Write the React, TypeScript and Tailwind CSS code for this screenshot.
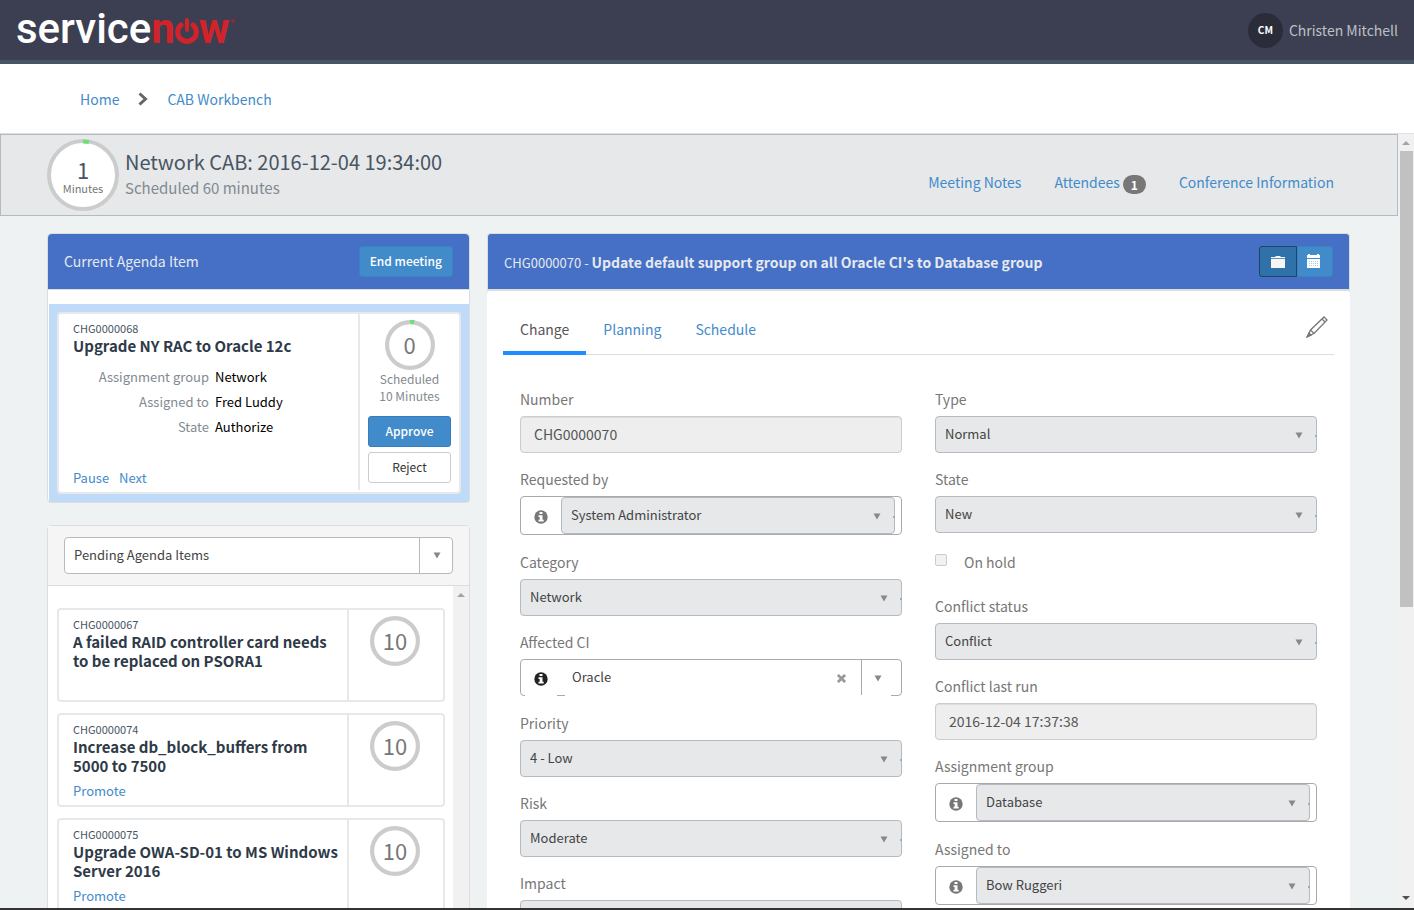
import React from 'react'

const agendaItems = [
  { number: 'CHG0000067', title: 'A failed RAID controller card needs to be replaced on PSORA1', minutes: '10', promote: false },
  { number: 'CHG0000074', title: 'Increase db_block_buffers from 5000 to 7500', minutes: '10', promote: true },
  { number: 'CHG0000075', title: 'Upgrade OWA-SD-01 to MS Windows Server 2016', minutes: '10', promote: true },
]

const currentDetails = [
  { label: 'Assignment group', value: 'Network' },
  { label: 'Assigned to', value: 'Fred Luddy' },
  { label: 'State', value: 'Authorize' },
]

const Logo: React.FC = () => (
  <a href="#" aria-label="servicenow" className="flex items-center pb-0.5 font-[Roboto,sans-serif] text-[42px] leading-[58px] font-medium text-white">
    <span>service</span>
    <span className="font-bold text-[#d2232a]">n</span>
    <svg viewBox="0 0 24 28" className="mt-1 h-7 w-6" fill="none" stroke="#d2232a" strokeLinecap="round">
      <path d="M6 8a9.300 9.300 0 1 0 12 0" strokeWidth="5" />
      <path d="M12 3v10" strokeWidth="4" />
    </svg>
    <span className="font-bold text-[#d2232a]">w</span>
    <svg viewBox="0 0 4 4" className="mb-4 ml-px size-1" fill="#8f2a36">
      <circle cx="2" cy="2" r="2" />
    </svg>
  </a>
)

const Caret: React.FC = () => (
  <svg viewBox="0 0 8 7" className="h-[7px] w-2" fill="#888">
    <path d="M0.5 0.5h7L4 6.5z" />
  </svg>
)

const InfoIcon: React.FC = () => (
  <svg viewBox="0 0 14 14" className="size-3.5">
    <circle cx="7" cy="7" r="6.700" fill="currentColor" />
    <path d="M5.500 2h3v2h-3zM4.500 5.200h4v4.500h1.200v1.700H4.500V9.700h1.200V6.900H4.500z" fill="#fff" />
  </svg>
)

const ScrollArrow: React.FC<{ down?: boolean }> = ({ down }) => (
  <svg viewBox="0 0 8 4" className="h-1 w-2">
    {down ? <path d="M0 0h8L4 4z" fill="#505050" /> : <path d="M0 4h8L4 0z" fill="#a3a3a3" />}
  </svg>
)

interface RingProps {
  value: string
  caption?: string
  progress?: boolean
  large?: boolean
}

const Ring: React.FC<RingProps> = ({ value, caption, progress, large }) => (
  <div className={large ? 'relative size-[72px] shrink-0' : 'relative size-[50px] shrink-0'}>
    <svg viewBox="0 0 72 72" className="size-full" fill="none">
      <circle cx="36" cy="36" r={large ? 34 : 33} fill="#fff" stroke="#ccc" strokeWidth={large ? 4 : 6} />
      {progress && <path d="M36 2.5q3 0 6 .6" stroke="#6ee07a" strokeWidth={large ? 4 : 6} />}
    </svg>
    <div className="absolute inset-0 flex flex-col items-center justify-center text-[#777]">
      <span className={large ? 'mt-1.5 text-[22px] leading-5 text-[#485563]' : 'pb-0.5 text-[22px] leading-6'}>{value}</span>
      {caption && <span className="text-[11px] leading-[18px]">{caption}</span>}
    </div>
  </div>
)

const Label: React.FC<{ id: string; children: React.ReactNode }> = ({ id, children }) => (
  <label htmlFor={id} className="mb-2 block text-sm leading-[18px] text-[#777]">
    {children}
  </label>
)

const GraySelect: React.FC<{ id: string; value: string }> = ({ id, value }) => (
  <div className="relative">
    <select
      id={id}
      disabled
      className="block h-[37px] w-full appearance-none rounded border border-[#b5bac0] bg-[#e6e8ea] px-[9px] pb-0.5 text-[13px] text-[#444] opacity-100"
    >
      <option>{value}</option>
    </select>
    <div className="pointer-events-none absolute inset-y-0 right-3.5 flex items-center pt-px">
      <Caret />
    </div>
    <div className="absolute right-0 bottom-4 h-0.5 w-0.5 bg-[#a5aab0]" />
  </div>
)

const SelectField: React.FC<{ id: string; label: string; value: string }> = ({ id, label, value }) => (
  <div>
    <Label id={id}>{label}</Label>
    <GraySelect id={id} value={value} />
  </div>
)

const TextField: React.FC<{ id: string; label: string; value: string }> = ({ id, label, value }) => (
  <div>
    <Label id={id}>{label}</Label>
    <input
      id={id}
      readOnly
      value={value}
      className="block h-[37px] w-full rounded border border-[#ccc] bg-[#eee] px-[13px] pb-0.5 text-sm text-[#555] shadow-[inset_0_1px_1px_rgba(0,0,0,0.075)]"
    />
  </div>
)

const ReferenceField: React.FC<{ id: string; label: string; value: string }> = ({ id, label, value }) => (
  <div className="mb-px">
    <Label id={id}>{label}</Label>
    <div className="flex h-[39px] rounded border border-[#aaa] pr-1.5">
      <button type="button" aria-label="Show record" className="flex w-10 shrink-0 items-center justify-center pt-0.5 text-[#777]">
        <InfoIcon />
      </button>
      <div className="flex-1">
        <GraySelect id={id} value={value} />
      </div>
    </div>
  </div>
)

const ClearableField: React.FC<{ id: string; label: string; value: string }> = ({ id, label, value }) => (
  <div className="mb-px">
    <Label id={id}>{label}</Label>
    <div className="relative flex h-[37px] rounded border border-[#aaa]">
      {/* the inner box covers most of the lower border */}
      <div className="absolute -bottom-px left-1 h-px w-8 bg-white" />
      <div className="absolute right-2.5 -bottom-px left-11 h-px bg-white" />
      <button type="button" aria-label="Show record" className="flex w-10 shrink-0 items-center justify-center pt-0.5 text-[#222]">
        <InfoIcon />
      </button>
      <input id={id} readOnly value={value} className="min-w-0 flex-1 px-[11px] pb-0.5 text-[13px] text-[#444]" />
      <button type="button" aria-label="Clear" className="flex w-10 items-center justify-center pt-0.5">
        <svg viewBox="0 0 10 10" className="size-[9px]" stroke="#999" strokeWidth="3">
          <path d="M1 1l8 8M9 1l-8 8" />
        </svg>
      </button>
      <button type="button" aria-label="Open list" className="flex w-10 items-center border-l border-[#aaa] pt-0.5 pl-3">
        <Caret />
      </button>
    </div>
  </div>
)

const CurrentItem: React.FC = () => (
  <section className="rounded border border-[#ddd] bg-white">
    <header className="flex h-14 items-center justify-between rounded-t border-b border-[#ddd] bg-[#4570c5] px-4">
      <h2 className="pb-0.5 text-sm text-[#e6e9ee]">Current Agenda Item</h2>
      <button type="button" className="h-[31px] rounded-[3px] border border-[#3b82c0] bg-[#428bca] px-2.5 pb-0.5 text-xs font-medium text-white">
        End meeting
      </button>
    </header>
    <div className="mt-3.5 ml-px bg-[#c0dbf8] p-2">
      <div className="flex h-[182px] rounded border-2 border-[#e6e8ea] bg-white">
        <div className="flex flex-1 flex-col pt-1.5 pr-3 pb-1 pl-3.5">
          <span className="text-[11px] leading-4 text-[#485563]">CHG0000068</span>
          <h3 className="text-[15px] leading-5 font-bold text-[#2e3a47]">Upgrade NY RAC to Oracle 12c</h3>
          <dl className="mt-2 grid grid-cols-[136px_1fr] gap-x-1.5 text-[13px] leading-[25px]">
            {currentDetails.map((row) => (
              <React.Fragment key={row.label}>
                <dt className="text-right text-[#818a91]">{row.label}</dt>
                <dd className="text-black">{row.value}</dd>
              </React.Fragment>
            ))}
          </dl>
          <div className="mt-auto flex gap-2.5 text-[13px] leading-5 text-[#428bca]">
            <a href="#">Pause</a>
            <a href="#">Next</a>
          </div>
        </div>
        <div className="mb-0.5 flex w-[101px] flex-col items-center border-l-2 border-[#e6e8ea] px-2 pt-1.5">
          <Ring value="0" progress />
          <p className="text-center text-xs leading-[17px] text-[#818a91]">
            Scheduled
            <br />
            10 Minutes
          </p>
          <button type="button" className="mt-3 h-[31px] w-full rounded-[3px] border border-[#357ebd] bg-[#428bca] pb-0.5 text-xs font-medium text-white">
            Approve
          </button>
          <button type="button" className="mt-[5px] h-[31px] w-full rounded-[3px] border border-[#ccc] bg-white pb-0.5 text-xs text-[#333]">
            Reject
          </button>
        </div>
      </div>
    </div>
  </section>
)

const PendingItems: React.FC = () => (
  <section className="mt-[22px] rounded border border-[#ddd] bg-white">
    <header className="border-b border-[#ddd] bg-[#f5f5f5] px-4 py-[11px]">
      <div className="relative">
        <select
          aria-label="Agenda filter"
          className="block h-[37px] w-full appearance-none rounded border border-[#b5bac0] bg-white px-[9px] pb-0.5 text-[13px] text-[#444]"
        >
          <option>Pending Agenda Items</option>
        </select>
        <div className="pointer-events-none absolute inset-y-0 right-0 flex w-[34px] items-center justify-center border-l border-[#b5bac0]">
          <Caret />
        </div>
      </div>
    </header>
    <div className="flex">
      <ul className="flex flex-1 flex-col gap-[11px] py-[22px] pr-2 pl-[9px]">
        {agendaItems.map((item) => (
          <li key={item.number} className="flex h-[94px] rounded border-2 border-[#e6e8ea]">
            <div className="flex flex-1 flex-col pt-1.5 pr-2 pb-1 pl-3.5">
              <span className="text-[11px] leading-4 text-[#485563]">{item.number}</span>
              <h3 className="text-[15px] leading-[19px] font-bold text-[#2e3a47]">{item.title}</h3>
              {item.promote && (
                <a href="#" className="mt-auto text-[13px] leading-5 text-[#428bca]">
                  Promote
                </a>
              )}
            </div>
            <div className="flex w-24 justify-center border-l-2 border-[#e6e8ea] pt-1.5 pr-0.5">
              <Ring value={item.minutes} />
            </div>
          </li>
        ))}
      </ul>
      <div className="flex w-4 justify-center bg-[#f1f1f1] pt-[7px]">
        <ScrollArrow />
      </div>
    </div>
  </section>
)

const ChangeRecord: React.FC = () => (
  <section className="min-w-0 flex-1">
    <header className="flex h-[58px] items-center justify-between rounded-t border border-b-2 border-[#ddd] bg-[#4570c5] px-4">
      <h2 className="pt-0.5 text-[13px] text-[#e6e9ee]">
        CHG0000070 - <strong className="text-sm">Update default support group on all Oracle CI's to Database group</strong>
      </h2>
      <div className="flex">
        <button type="button" aria-label="Record" className="flex h-[31px] w-[38px] items-center justify-center rounded-l-[3px] border border-[#1d4567] bg-[#3071a9]">
          <svg viewBox="0 0 14 12" className="h-3 w-3.5" fill="#f5f5f5">
            <path d="M0 1h4l1-1h4l1 1h4v1.300H0zM0 3h14v9H0z" />
          </svg>
        </button>
        <button type="button" aria-label="Calendar" className="flex h-[31px] w-9 items-center justify-center rounded-r-[3px] border border-[#3b82c0] bg-[#428bca] pr-1 pb-0.5">
          <svg viewBox="0 0 13 14" className="h-3.5 w-[13px]" fill="#fff">
            <path d="M0 1h1V0h2v1h7V0h2v1h1v3H0zM0 5h13v9H0z" />
            <path d="M2.500 7v6M4.500 7v6M6.500 7v6M8.500 7v6M10.500 7v6" stroke="#a9cbe8" strokeWidth="1" strokeDasharray="1 1" />
          </svg>
        </button>
      </div>
    </header>
    <div className="rounded-t bg-white px-4 pt-3.5">
      <div className="flex items-end justify-between border-b border-[#ddd]">
        <nav className="-mb-px flex text-sm leading-5 text-[#428bca]">
          <a href="#" className="border-b-4 border-[#1f8cff] px-[17px] pt-3.5 pb-3 text-[#555]">Change</a>
          <a href="#" className="px-[17px] pt-3.5">Planning</a>
          <a href="#" className="px-[17px] pt-3.5">Schedule</a>
        </nav>
        <button type="button" aria-label="Edit" className="mr-1.5 mb-4">
          <svg viewBox="0 0 22 22" className="size-[22px]" fill="none" stroke="#777" strokeWidth="1.300">
            <path d="M1.500 20.500l3-6.500L18 1l3 3L8 17.500zM4.500 14L8 17.500M16 3l3 3" />
            <path d="M1 21l2-4 2 2z" fill="#777" />
          </svg>
        </button>
      </div>
      <form className="grid grid-cols-2 items-start gap-x-[33px] px-[17px] pt-[35px]">
        <div className="flex flex-col gap-[17px]">
          <TextField id="number" label="Number" value="CHG0000070" />
          <ReferenceField id="requested-by" label="Requested by" value="System Administrator" />
          <SelectField id="category" label="Category" value="Network" />
          <ClearableField id="affected-ci" label="Affected CI" value="Oracle" />
          <SelectField id="priority" label="Priority" value="4 - Low" />
          <SelectField id="risk" label="Risk" value="Moderate" />
          <SelectField id="impact" label="Impact" value="3 - Low" />
        </div>
        <div className="flex flex-col gap-[17px]">
          <SelectField id="type" label="Type" value="Normal" />
          <SelectField id="state" label="State" value="New" />
          <div className="flex h-[30px] items-start gap-[17px] pt-[3px]">
            <input
              id="on-hold"
              type="checkbox"
              disabled
              className="mt-px size-3 appearance-none rounded-xs border border-[#ccc] bg-[#f2f2f2]"
            />
            <label htmlFor="on-hold" className="text-sm leading-[18px] text-[#777]">On hold</label>
          </div>
          <SelectField id="conflict-status" label="Conflict status" value="Conflict" />
          <TextField id="conflict-last-run" label="Conflict last run" value="2016-12-04 17:37:38" />
          <ReferenceField id="assignment-group" label="Assignment group" value="Database" />
          <ReferenceField id="assigned-to" label="Assigned to" value="Bow Ruggeri" />
        </div>
      </form>
    </div>
  </section>
)

const App: React.FC = () => {
  return (
    <div className="flex h-screen flex-col overflow-hidden border-b-2 border-[#333] bg-[#eef2f3] font-['Noto_Sans_CJK_SC',sans-serif]">
      {/* Top bar */}
      <header className="flex h-16 shrink-0 items-center justify-between border-b-4 border-[#485566] bg-[#3c3f51] px-4">
        <Logo />
        <div className="flex items-center gap-1.5">
          <span className="flex size-[35px] items-center justify-center rounded-full bg-[#2a2d39] pb-0.5 text-[10px] font-bold text-white">CM</span>
          <span className="text-sm text-[#bcc0c8]">Christen Mitchell</span>
        </div>
      </header>

      {/* Breadcrumbs */}
      <nav className="flex h-[70px] shrink-0 items-center border-b border-[#dde0e2] bg-white px-20 text-sm text-[#428bca]">
        <a href="#">Home</a>
        <svg viewBox="0 0 10 14" className="mx-[18px] h-3.5 w-3" fill="none" stroke="#666" strokeWidth="3">
          <path d="M1.500 1.500L7.500 7l-6 5.500" />
        </svg>
        <a href="#">CAB Workbench</a>
      </nav>

      <div className="flex min-h-0 flex-1">
        <main className="min-w-0 flex-1 overflow-hidden">
          {/* Meeting summary */}
          <div className="flex h-[82px] items-center border border-[#b5bac0] bg-[#e6e8ea] pr-[63px] pl-[46px]">
            <Ring value="1" caption="Minutes" progress large />
            <div className="ml-1.5 flex-1 pb-0.5">
              <h1 className="text-xl leading-7 text-[#485563]">Network CAB: 2016-12-04 19:34:00</h1>
              <p className="text-[15px] leading-6 text-[#818a91]">Scheduled 60 minutes</p>
            </div>
            <div className="flex items-center gap-[33px] pt-3.5 text-sm leading-5 text-[#428bca]">
              <a href="#">Meeting Notes</a>
              <a href="#" className="flex items-center gap-[3px]">
                Attendees
                <span className="mt-1 h-[19px] rounded-full bg-[#777] px-2 text-xs leading-[19px] font-bold text-white">1</span>
              </a>
              <a href="#">Conference Information</a>
            </div>
          </div>

          <div className="flex items-start gap-[17px] pt-[17px] pr-12 pl-[47px]">
            <div className="w-[423px] shrink-0">
              <CurrentItem />
              <PendingItems />
            </div>
            <ChangeRecord />
          </div>
        </main>

        {/* Page scrollbar */}
        <div className="flex w-4 shrink-0 flex-col items-center bg-[#f1f1f1] pt-[7px] pb-2">
          <ScrollArrow />
          <div className="mt-1.5 h-[456px] w-[13px] bg-[#c1c1c1]" />
          <div className="mt-auto flex">
            <ScrollArrow down />
          </div>
        </div>
      </div>
    </div>
  )
}

export default App
